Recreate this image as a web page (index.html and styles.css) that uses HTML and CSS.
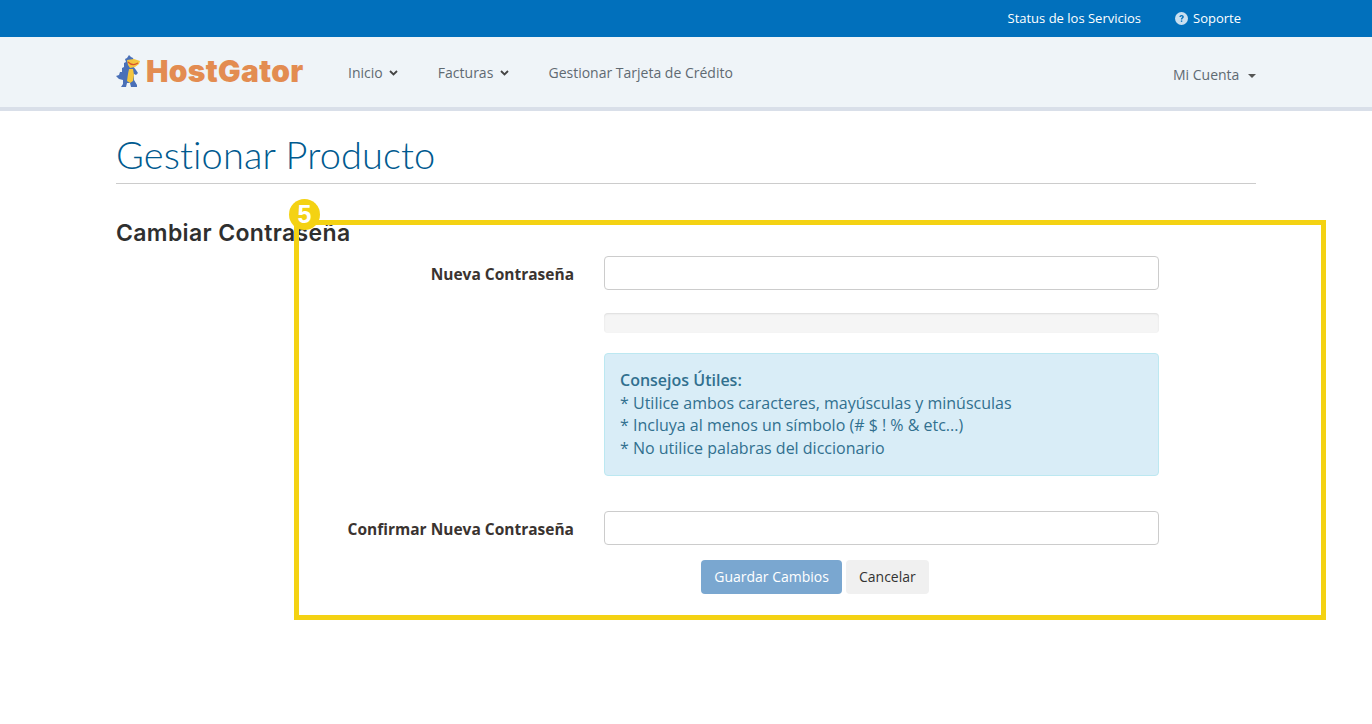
FILE: index.html
```html
<!DOCTYPE html>
<html lang="en">
<head>
<meta charset="UTF-8">
<title>Gestionar Producto</title>
<link rel="stylesheet" href="styles.css">
</head>
<body>

<div class="topbar">
  <div class="wrap topbar-inner">
    <a class="top-link status-link">Status de los Servicios</a>
    <a class="top-link">
      <svg class="help-icon" viewBox="0 0 14 14" width="13" height="13">
        <circle cx="7" cy="7" r="7" fill="#c9dff0"/>
        <path d="M4.700 5.400C4.800 4 5.800 3.200 7.100 3.200c1.400 0 2.400.9 2.400 2 0 1.600-1.700 1.600-1.700 3H6.300c0-2 1.600-2 1.600-3 0-.4-.3-.7-.8-.7-.5 0-.9.3-1 .9z" fill="#0170bc"/>
        <rect x="6.300" y="9.100" width="1.500" height="1.500" fill="#0170bc"/>
      </svg>
      Soporte
    </a>
  </div>
</div>

<div class="navbar">
  <div class="wrap navbar-inner">
    <div class="logo">
      <svg class="gator" viewBox="0 0 24 34" width="24" height="34">
        <path d="M13 1l2 2 2 1 1 3-1 5 3 4 2 3-2 2-2-1v6l3 5v2h-6l-1-4h-3l-1 4H5l2-3v-4l-4-1-3-3 3-1 1-3h2l0-4 2-1V9l2-1-1-3 2-1z" fill="#4a70b8"/>
        <path d="M11 6l7-1 6 2-1 3-4 3-5 1-2-3z" fill="#f4c63f"/>
        <path d="M13 15h4l1 6-1 6-3 2-3-2 1-7z" fill="#f4c63f"/>
        <path d="M12 8c3 3 7 3 10 1" fill="none" stroke="#d9532c" stroke-width="1.200"/>
      </svg>
      <span class="logo-text">HostGator</span>
    </div>
    <ul class="nav-menu">
      <li>Inicio <svg class="chev" viewBox="0 0 9 6" width="9" height="6"><path d="M1 1l3.500 3.500L8 1" fill="none" stroke="#444" stroke-width="1.800"/></svg></li>
      <li>Facturas <svg class="chev" viewBox="0 0 9 6" width="9" height="6"><path d="M1 1l3.500 3.500L8 1" fill="none" stroke="#444" stroke-width="1.800"/></svg></li>
      <li>Gestionar Tarjeta de Crédito</li>
    </ul>
    <div class="account">Mi Cuenta <span class="caret"></span></div>
  </div>
</div>

<div class="wrap">
  <h1 class="page-title">Gestionar Producto</h1>
  <h2 class="section-title">Cambiar Contraseña</h2>

  <form class="pw-form">
    <div class="form-row">
      <label class="field-label">Nueva Contraseña</label>
      <div class="field"><input type="password" class="text-input"></div>
    </div>
    <div class="form-row">
      <div class="field"><div class="strength"></div></div>
    </div>
    <div class="form-row">
      <div class="field">
        <div class="tips">
          <strong class="tips-title">Consejos Útiles:</strong><br>
          * Utilice ambos caracteres, mayúsculas y minúsculas<br>
          * Incluya al menos un símbolo (# $ ! % &amp; etc...)<br>
          * No utilice palabras del diccionario
        </div>
      </div>
    </div>
    <div class="form-row">
      <label class="field-label">Confirmar Nueva Contraseña</label>
      <div class="field"><input type="password" class="text-input"></div>
    </div>
    <div class="actions">
      <button type="button" class="btn btn-primary">Guardar Cambios</button>
      <button type="button" class="btn btn-default">Cancelar</button>
    </div>
  </form>
</div>

<!-- yellow callout drawn over the page -->
<div class="callout"></div>
<div class="callout-badge">5</div>

</body>
</html>
```

FILE: styles.css
```css
/* General styles */
body {
  font-family: "Open Sans", Arial, sans-serif;
  font-size: 14px;
  color: #333;
  background-color: #fff;
  margin: 0;
  padding: 0;
}

.wrap {
  width: 1140px;
  margin: 0 auto;
}

/* Top bar */
.topbar {
  height: 37px;
  background-color: #0170bc;
}

.topbar-inner {
  display: flex;
  justify-content: flex-end;
  align-items: center;
  height: 36px;
  padding-right: 15px;
  box-sizing: border-box;
}

.top-link {
  color: #fff;
  font-size: 13px;
  display: flex;
  align-items: center;
}

.status-link {
  margin-right: 34px;
}

.help-icon {
  margin-right: 5px;
}

/* Nav bar */
.navbar {
  height: 70px;
  background-color: #eff4f8;
  border-bottom: 4px solid #d9dfe9;
}

.navbar-inner {
  display: flex;
  align-items: center;
  height: 70px;
}

.logo {
  display: flex;
  align-items: center;
  width: 232px;
  margin-top: -3px;
}

.logo-text {
  font-family: Inter, "Liberation Sans", sans-serif;
  font-weight: 900;
  font-size: 30px;
  letter-spacing: 0.3px;
  color: #e38c51;
  margin-left: 6px;
}

.nav-menu {
  display: flex;
  list-style: none;
  margin: 0;
  padding: 0;
  gap: 39.500px;
  color: #5f6a72;
  flex: 1;
}

.chev {
  margin-left: 3px;
  vertical-align: 2px;
}

.account {
  color: #5f6a72;
  margin-top: 4px;
}

.caret {
  display: inline-block;
  margin-left: 5px;
  vertical-align: 2px;
  border-top: 4px solid #555;
  border-left: 4px solid transparent;
  border-right: 4px solid transparent;
}

/* Headings */
.page-title {
  font-family: Lato, sans-serif;
  font-weight: 300;
  font-size: 38px;
  letter-spacing: 0.1px;
  line-height: 40px;
  color: #005a8f;
  margin: 0;
  padding: 23px 0 9px;
  border-bottom: 1px solid #ccc;
}

.section-title {
  font-family: Inter, sans-serif;
  font-weight: 600;
  font-size: 23px;
  letter-spacing: 0.35px;
  line-height: 26px;
  color: #2f2f2f;
  margin: 36px 0 0;
}

/* Form */
.pw-form {
  margin-top: 10px;
}

.form-row {
  display: flex;
  justify-content: flex-end;
  margin-right: 97px;
  align-items: center;
}

.field-label {
  font-size: 15.500px;
  font-weight: 700;
  color: #3a3330;
  margin: 2px 30px 0 0;
}

.field {
  width: 555px;
}

.text-input {
  display: block;
  width: 100%;
  height: 34px;
  box-sizing: border-box;
  border: 1px solid #ccc;
  border-radius: 4px;
}

.strength {
  height: 20px;
  margin-top: 23px;
  background-color: #f5f5f5;
  border-radius: 4px;
  box-shadow: inset 0 1px 2px rgba(0, 0, 0, 0.1);
}

.tips {
  margin: 20px 0 35px;
  padding: 15px 15px 16px;
  font-size: 16px;
  line-height: 22.500px;
  color: #31708f;
  background-color: #d9edf7;
  border: 1px solid #bce8f1;
  border-radius: 4px;
}

.tips-title {
  font-weight: 600;
}

.actions {
  display: flex;
  justify-content: center;
  gap: 4px;
  margin: 15px 0 0 258px;
  width: 882px;
}

.btn {
  font-family: "Open Sans", Arial, sans-serif;
  font-size: 14px;
  height: 34px;
  padding: 0 13px 2px;
  border: none;
  border-radius: 4px;
}

.btn-primary {
  color: #fff;
  background-color: #7aa7d0;
}

.btn-default {
  color: #333;
  background-color: #f0f0f0;
}

/* Yellow callout */
.callout {
  position: absolute;
  left: 294px;
  top: 220px;
  width: 1022px;
  height: 390px;
  border: 5px solid #f4d213;
}

.callout-badge {
  position: absolute;
  left: 289px;
  top: 199px;
  width: 31px;
  height: 31px;
  border-radius: 50%;
  background-color: #f4d213;
  color: #fff;
  font-family: "Liberation Sans", Arial, sans-serif;
  font-weight: 700;
  font-size: 25px;
  line-height: 31px;
  text-align: center;
}
```
